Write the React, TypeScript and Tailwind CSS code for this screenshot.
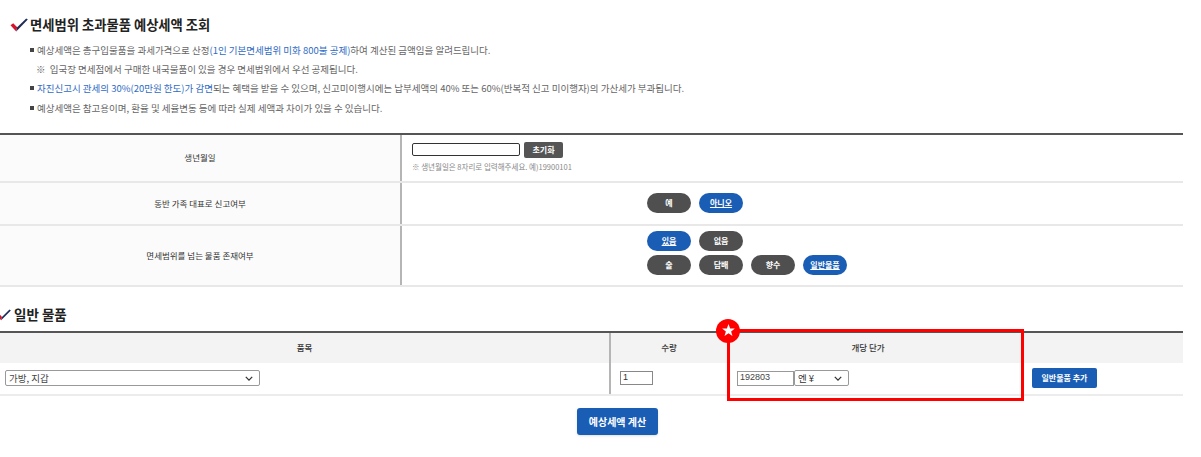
import React from 'react';

function Check({ className }: { className?: string }) {
  return (
    <svg viewBox="0 0 18 14" className={className}>
      <path d="M0.5 7.2 L3.2 5.2 L7.2 9.3 L6.2 13.4 Z" fill="#d3162e" />
      <path d="M6.2 13.4 L7.2 9.3 L16.2 0.4 L17.8 1.6 Z" fill="#1d2b57" />
    </svg>
  );
}

function Chevron() {
  return (
    <svg viewBox="0 0 10 6" className="w-[8px] h-[5px]">
      <path d="M1 1 L5 5 L9 1" fill="none" stroke="#333" strokeWidth="1.6" />
    </svg>
  );
}

function Pill({ label, active }: { label: string; active?: boolean }) {
  return (
    <button
      className={
        active
          ? 'w-[44px] h-[20px] rounded-full bg-[#1a5db5] text-white text-[8px] font-bold underline'
          : 'w-[44px] h-[20px] rounded-full bg-[#4f4f4f] text-white text-[8px] font-bold'
      }
    >
      {label}
    </button>
  );
}

function Star() {
  return (
    <svg viewBox="0 0 24 24" className="w-[15px] h-[15px]">
      <path
        d="M12 1.5 L14.6 8.6 L22.2 8.8 L16.2 13.5 L18.4 20.8 L12 16.5 L5.6 20.8 L7.8 13.5 L1.8 8.8 L9.4 8.6 Z"
        fill="#ffffff"
      />
    </svg>
  );
}

export default function App() {
  return (
    <div className="w-[1201px] h-[457px] bg-white relative overflow-hidden font-['Noto_Sans_CJK_KR',sans-serif] text-[#333]">
      {/* Title */}
      <div className="flex items-center h-[18px] mt-[16px] pl-[10px] gap-[2px]">
        <Check className="w-[18px] h-[14px]" />
        <h2 className="text-[13.3px] font-bold text-[#222]">면세범위 초과물품 예상세액 조회</h2>
      </div>

      {/* Notices */}
      <ul className="mt-[6px] pl-[30px] text-[9.5px] text-[#666]">
        <li className="h-[19.4px] flex items-center gap-[3px]">
          <span className="w-[4px] h-[4px] bg-[#444]" />
          <span>
            예상세액은 총구입물품을 과세가격으로 산정<span className="text-[#2f6cc4]">(1인 기본면세범위 미화 800불 공제)</span>하여 계산된 금액임을 알려드립니다.
          </span>
        </li>
        <li className="h-[19.4px] flex items-center pl-[6px]">
          <span>※&nbsp; 입국장 면세점에서 구매한 내국물품이 있을 경우 면세범위에서 우선 공제됩니다.</span>
        </li>
        <li className="h-[19.4px] flex items-center gap-[3px]">
          <span className="w-[4px] h-[4px] bg-[#444]" />
          <span>
            <span className="text-[#2f6cc4]">자진신고시 관세의 30%(20만원 한도)가 감면</span>되는 혜택을 받을 수 있으며, 신고미이행시에는 납부세액의 40% 또는 60%(반복적 신고 미이행자)의 가산세가 부과됩니다.
          </span>
        </li>
        <li className="h-[19.4px] flex items-center gap-[3px]">
          <span className="w-[4px] h-[4px] bg-[#444]" />
          <span>예상세액은 참고용이며, 환율 및 세율변동 등에 따라 실제 세액과 차이가 있을 수 있습니다.</span>
        </li>
      </ul>

      {/* Table 1 */}
      <div className="mt-[15px] w-[1183px] border-t-2 border-[#555] text-[8.5px]">
        <div className="flex h-[48px] border-b-2 border-[#e8e8e8]">
          <div className="w-[402px] bg-[#fbfbfb] border-r-2 border-[#b5b5b5] flex items-center justify-center">생년월일</div>
          <div className="flex-1 pl-[10px] pt-[7px]">
            <div className="flex items-center gap-[4px]">
              <input className="w-[108px] h-[13px] border border-[#333] rounded-[2px] bg-white" />
              <button className="w-[39px] h-[16px] bg-[#555] text-white text-[8px] font-bold rounded-[2px]">초기화</button>
            </div>
            <p className="mt-[3px] text-[7.5px] text-[#888]">※ 생년월일은 8자리로 입력해주세요. 예)19900101</p>
          </div>
        </div>
        <div className="flex h-[43px] border-b-2 border-[#e8e8e8]">
          <div className="w-[402px] bg-[#fbfbfb] border-r-2 border-[#b5b5b5] flex items-center justify-center">동반 가족 대표로 신고여부</div>
          <div className="flex-1 pl-[245px] flex items-center gap-[8px]">
            <Pill label="예" />
            <Pill label="아니오" active />
          </div>
        </div>
        <div className="flex h-[61px] border-b-2 border-[#e8e8e8]">
          <div className="w-[402px] bg-[#fbfbfb] border-r-2 border-[#b5b5b5] flex items-center justify-center">면세범위를 넘는 물품 존재여부</div>
          <div className="flex-1 pl-[245px] pt-[5px] flex flex-col gap-[4px]">
            <div className="flex gap-[8px]">
              <Pill label="있음" active />
              <Pill label="없음" />
            </div>
            <div className="flex gap-[8px]">
              <Pill label="술" />
              <Pill label="담배" />
              <Pill label="향수" />
              <Pill label="일반물품" active />
            </div>
          </div>
        </div>
      </div>

      {/* Section 2 */}
      <div className="flex items-center h-[18px] mt-[19px] ml-[-4px] gap-[3px]">
        <Check className="w-[15px] h-[12px]" />
        <h3 className="text-[13.5px] font-bold text-[#222]">일반 물품</h3>
      </div>

      <div className="relative mt-[7px] w-[1183px] border-t-2 border-[#555] text-[8.5px]">
        <div className="flex h-[30px] bg-[#f3f3f3]">
          <div className="w-[611px] border-r-2 border-[#b5b5b5] flex items-center justify-center font-medium">품목</div>
          <div className="w-[116px] flex items-center justify-center font-medium">수량</div>
          <div className="w-[282px] flex items-center justify-center font-medium">개당 단가</div>
          <div className="flex-1" />
        </div>
        <div className="flex h-[33px] border-b-2 border-[#ececec] items-center">
          <div className="w-[611px] h-full border-r-2 border-[#b5b5b5] flex items-center pl-[5px]">
            <div className="w-[255px] h-[16px] border border-[#999] rounded-[2px] flex items-center justify-between pl-[3px] pr-[6px] text-[9.5px] text-[#444]">
              <span>가방, 지갑</span>
              <Chevron />
            </div>
          </div>
          <div className="w-[116px] h-full flex items-center pl-[9px]">
            <div className="w-[33px] h-[14px] border border-[#888] flex items-center px-[2px] text-[9px] font-['Liberation_Sans',sans-serif]">1</div>
          </div>
          <div className="w-[282px] h-full flex items-center pl-[10px]">
            <div className="w-[57px] h-[15px] border border-[#999] flex items-center px-[2px] text-[9px] text-[#444] font-['Liberation_Sans',sans-serif]">192803</div>
            <div className="w-[55px] h-[16px] border border-[#999] rounded-[2px] flex items-center justify-between pl-[3px] pr-[6px] text-[9.5px] text-[#333]">
              <span>엔 ¥</span>
              <Chevron />
            </div>
          </div>
          <div className="flex-1 h-full flex items-center pl-[23px]">
            <button className="w-[65px] h-[20px] bg-[#1a5db5] text-white text-[8px] font-bold rounded-[2px]">일반물품 추가</button>
          </div>
        </div>

        {/* annotation overlay */}
        <div className="absolute left-[727px] top-[-4px] w-[297px] h-[72px] border-[3px] border-[#ff0000]" />
        <div className="absolute left-[716px] top-[-14px] w-[24px] h-[24px] rounded-full bg-[#ff0000] flex items-center justify-center">
          <Star />
        </div>
      </div>

      <div className="mt-[11px] ml-[577px]">
        <button className="w-[81px] h-[27px] bg-[#1a5db5] text-white text-[10px] font-bold rounded-[3px] shadow-sm">예상세액 계산</button>
      </div>
    </div>
  );
}
